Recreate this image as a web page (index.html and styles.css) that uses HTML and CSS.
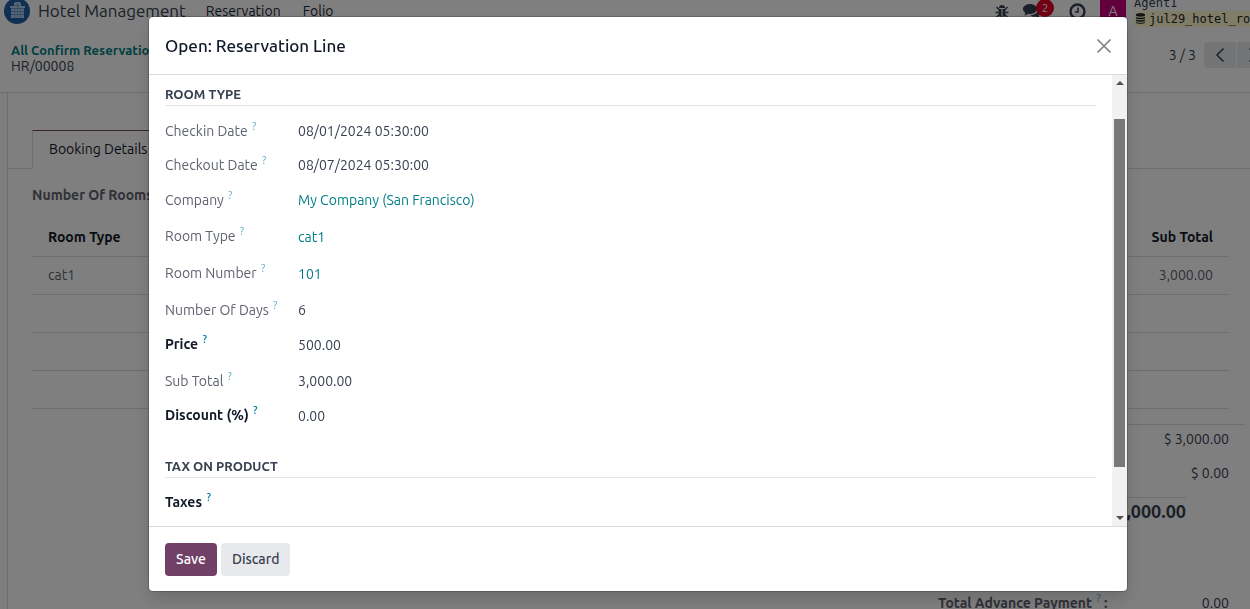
FILE: index.html
```html
<!DOCTYPE html>
<html lang="en">
<head>
<meta charset="utf-8">
<title>Hotel Management - Reservation Line</title>
<link rel="stylesheet" href="styles.css">
</head>
<body>
<div class="app">
  <header class="navbar">
    <svg class="app-icon" viewBox="0 0 26 26" aria-hidden="true">
      <circle cx="13" cy="13" r="13" fill="#1f5fa8"/>
      <path d="M6 8h4V5h1V4h5v1h1v3h4v2h-1v10H7V10H6z" fill="#b4cde6"/>
      <path d="M7 10.500h13M7 13.500h13M7 16.500h13M11 7.500h5" stroke="#5f93cc" fill="none"/>
      <path d="M10.500 10v10M13.500 5v15M16.500 10v10" stroke="#7aa5d2" fill="none"/>
    </svg>
    <span class="brand">Hotel Management</span>
    <nav class="menu">
      <a href="#">Reservation</a>
      <a href="#">Folio</a>
    </nav>
    <div class="systray">
      <button class="tray-btn" aria-label="Debug">
        <svg width="14" height="14" viewBox="0 0 14 14"><path d="M4 4a3 3 0 0 1 6 0zM3.500 5H6.500v8C4.500 13 3.500 11.500 3.500 9zM7.500 5h3v4c0 2.500-1 4-3 4z" fill="#374151"/><path d="M1.500 3L4 5.500M12.500 3L10 5.500M.5 8.500h3M10.500 8.500h3M1.500 13L4.300 10.800M12.500 13L9.700 10.800" stroke="#374151" stroke-width="1.500"/></svg>
      </button>
      <button class="tray-btn chat" aria-label="Messages, 2 unread">
        <svg width="18" height="16" viewBox="0 0 18 16"><path d="M7 1c3.900 0 7 2.200 7 5s-3.100 5-7 5c-.6 0-1.200 0-1.700-.2C4 11.800 2.500 12.400 1 12.500c.8-.8 1.300-1.600 1.500-2.600C1 9 0 7.600 0 6c0-2.800 3.100-5 7-5z" fill="#374151"/><path d="M15.200 5.500C17 6.400 18 7.700 18 9.200c0 1.500-.9 2.800-2.400 3.600.2 1 .7 1.800 1.400 2.500-1.500-.1-3-.7-4.200-1.700-2.500.4-4.600-.1-6-1.300 4.600.1 8.400-2.700 8.400-6.300z" fill="#374151"/></svg>
        <span class="badge">2</span>
      </button>
      <button class="tray-btn" aria-label="Activities">
        <svg width="17" height="17" viewBox="0 0 17 17" fill="none" stroke="#374151"><circle cx="8.500" cy="8.500" r="7" stroke-width="2.400"/><path d="M9 4.500v4.500H6" stroke-width="1.500"/></svg>
      </button>
      <span class="avatar">A</span>
      <div class="user">
        <span>Agent1</span>
        <span class="db"><svg width="9" height="11" viewBox="0 0 9 11"><path d="M0 1.500C0-.3 9-.3 9 1.500v1C9 4 0 4 0 2.500zM0 4c1 1 8 1 9 0v1.300c-1 1.300-8 1.300-9 0zM0 6.500c1 1 8 1 9 0v1.300c-1 1.300-8 1.300-9 0zM0 9c1 1 8 1 9 0v.8c-1 1.400-8 1.400-9 0z" fill="#212529"/></svg>jul29_hotel_ro</span>
      </div>
    </div>
  </header>

  <div class="control-panel">
    <div class="crumbs">
      <a href="#">All Confirm Reservations</a>
      <span>HR/00008</span>
    </div>
    <div class="pager">
      <span>3 / 3</span>
      <div class="pager-btns">
        <button aria-label="Previous"><svg width="10" height="16" viewBox="0 0 10 16"><path d="M8.500 1.500L2 8l6.500 6.500" fill="none" stroke="#374151" stroke-width="1.500"/></svg></button>
        <button aria-label="Next"><svg width="10" height="16" viewBox="0 0 10 16"><path d="M1.500 1.500L8 8l-6.500 6.500" fill="none" stroke="#374151" stroke-width="1.500"/></svg></button>
      </div>
    </div>
  </div>

  <main class="sheet">
    <div class="tabs"><button class="tab">Booking Details</button></div>
    <div class="tab-body">
      <div class="rooms-label">Number Of Rooms</div>
      <table class="lines">
        <thead><tr><th>Room Type</th><th class="num">Sub Total</th></tr></thead>
        <tbody>
          <tr><td>cat1</td><td class="num">3,000.00</td></tr>
          <tr><td></td><td></td></tr>
          <tr><td></td><td></td></tr>
          <tr><td></td><td></td></tr>
        </tbody>
      </table>
    </div>
    <div class="totals">
      <div class="amount">$ 3,000.00</div>
      <div class="amount">$ 0.00</div>
      <div class="grand">,000.00</div>
      <div class="advance"><span>Total Advance Payment <sup class="help">?</sup> :</span><span class="advance-value">0.00</span></div>
    </div>
  </main>
</div>

<div class="overlay">
  <section class="modal" role="dialog" aria-modal="true" aria-labelledby="dialog-title">
    <header class="modal-head">
      <h1 id="dialog-title">Open: Reservation Line</h1>
      <button class="close" aria-label="Close"><svg width="16" height="16" viewBox="0 0 16 16"><path d="M1.500 1.500l13 13M14.500 1.500l-13 13" stroke="#808080" stroke-width="1.700"/></svg></button>
    </header>
    <div class="modal-body">
      <div class="form">
        <h2>ROOM TYPE</h2>
        <dl class="fields">
          <div class="row date"><dt>Checkin Date <sup class="help">?</sup></dt><dd>08/01/2024 05:30:00</dd></div>
          <div class="row date"><dt>Checkout Date <sup class="help">?</sup></dt><dd>08/07/2024 05:30:00</dd></div>
          <div class="row"><dt>Company <sup class="help">?</sup></dt><dd><a href="#">My Company (San Francisco)</a></dd></div>
          <div class="row link"><dt>Room Type <sup class="help">?</sup></dt><dd><a href="#">cat1</a></dd></div>
          <div class="row link"><dt>Room Number <sup class="help">?</sup></dt><dd><a href="#">101</a></dd></div>
          <div class="row"><dt>Number Of Days <sup class="help">?</sup></dt><dd>6</dd></div>
          <div class="row editable"><dt><label for="price">Price <sup class="help">?</sup></label></dt><dd><input id="price" type="text" value="500.00"></dd></div>
          <div class="row"><dt>Sub Total <sup class="help">?</sup></dt><dd>3,000.00</dd></div>
          <div class="row editable"><dt><label for="discount">Discount (%) <sup class="help">?</sup></label></dt><dd><input id="discount" type="text" value="0.00"></dd></div>
        </dl>
        <h2>TAX ON PRODUCT</h2>
        <dl class="fields">
          <div class="row editable"><dt><label for="taxes">Taxes <sup class="help">?</sup></label></dt><dd><input id="taxes" type="text"></dd></div>
        </dl>
      </div>
      <div class="scrollbar" aria-hidden="true">
        <svg width="8" height="4" viewBox="0 0 8 4"><path d="M0 4L4 0l4 4z" fill="#505050"/></svg>
        <div class="track"><div class="thumb"></div></div>
        <svg width="8" height="4" viewBox="0 0 8 4"><path d="M0 0l4 4 4-4z" fill="#505050"/></svg>
      </div>
    </div>
    <footer class="modal-foot">
      <button class="btn primary">Save</button>
      <button class="btn">Discard</button>
    </footer>
  </section>
</div>
</body>
</html>
```
FILE: styles.css
```css
* { box-sizing: border-box; }
html, body { height: 100%; margin: 0; }
body {
  overflow: hidden;
  font-family: Ubuntu, "Noto Sans", sans-serif;
  font-size: 14px;
  line-height: 20px;
  color: #374151;
  background: #f9fafb;
}
h1, h2, dl, dd { margin: 0; }
a { text-decoration: none; color: #017e84; }
button, input { font: inherit; color: inherit; border: 0; padding: 0; background: none; }
.app { height: 100%; overflow: hidden; }

/* top bar */
.navbar { display: flex; align-items: center; height: 22px; padding-left: 4px; background: #fff; }
.app-icon { width: 26px; height: 26px; margin-right: 8px; flex: none; }
.brand { font-size: 17px; white-space: nowrap; }
.menu { display: flex; gap: 22px; margin-left: 20px; }
.menu a { color: #1f2937; }
.systray { display: flex; align-items: center; margin-left: auto; }
.tray-btn { display: flex; align-items: center; }
.systray .tray-btn { margin-right: 14px; }
.tray-btn.chat { position: relative; width: 32px; }
.badge {
  position: absolute; left: 13px; top: -4px;
  width: 18px; height: 18px; border-radius: 9px;
  background: #e4002b; color: #fff; font-size: 11px; line-height: 18px;
}
.avatar { width: 26px; height: 26px; margin-right: 8px; background: #c4007a; color: #fff; text-align: center; line-height: 26px; }
.user { display: flex; flex-direction: column; width: 116px; font-family: "DejaVu Sans Mono", monospace; font-size: 12px; line-height: 15px; }
.db { display: flex; align-items: center; gap: 4px; padding-left: 2px; line-height: 16px; background: #fffbd0; color: #212529; }
.db svg { flex: none; }

/* breadcrumbs and pager */
.control-panel { display: flex; justify-content: space-between; align-items: center; height: 71px; padding: 2px 0 0 11px; background: #fff; border-bottom: 1px solid #d8dadd; }
.crumbs { display: flex; flex-direction: column; font-size: 14px; line-height: 16px; }
.crumbs a { font-size: 13px; font-weight: 600; }
.pager { display: flex; align-items: center; gap: 8px; margin: 0 -19px 6px 0; }
.pager-btns { display: flex; gap: 1px; }
.pager-btns button { display: flex; align-items: center; justify-content: center; width: 32px; height: 26px; background: #e7e9ed; }
.pager-btns button:first-child { border-radius: 4px 0 0 4px; }

/* form sheet */
.sheet { height: 540px; margin-left: 7px; margin-right: -8px; background: #fff; border-left: 1px solid #d8dadd; }
.tabs { display: flex; padding: 37px 0 0 24px; height: 76px; border-bottom: 1px solid #d8dadd; }
.tab { height: 39px; padding: 0 16px 2px; color: #111827; background: #fff; border: 1px solid #d8dadd; border-top-color: #714b67; border-bottom-color: #fff; }
.tab-body { padding: 16px 29px 0 24px; }
.rooms-label { font-weight: 600; color: #5f636f; }
.lines { width: 100%; margin-top: 13px; border-collapse: collapse; }
.lines th { height: 38px; padding: 0 16px; text-align: left; font-weight: 600; color: #111827; border-bottom: 1px solid #d8dadd; }
.lines td { height: 38px; padding: 0 16px; color: #5f636f; border-bottom: 1px solid #d8dadd; }
.lines .num { text-align: right; }
.totals { display: flex; flex-direction: column; margin: 15px 13px 0 900px; padding: 4px 16px 0 0; border-top: 1px solid #d8dadd; }
.amount { text-align: right; margin-bottom: 14px; }
.grand { align-self: flex-end; margin-right: 43px; padding-top: 3px; border-top: 1px solid #d8dadd; font-size: 18px; font-weight: 600; }
.advance { display: flex; justify-content: space-between; margin-top: 72px; padding-left: 30px; font-weight: 600; color: #5f636f; white-space: nowrap; }
.advance-value { font-weight: 400; color: #374151; }

/* dialog */
.overlay { position: fixed; inset: 0; display: flex; justify-content: center; padding: 17px 0 18px 26px; background: rgba(0, 0, 0, .5); }
.modal { display: flex; flex-direction: column; width: 100%; max-width: 978px; background: #fff; border-radius: 4px; overflow: hidden; box-shadow: 0 0 0 1px rgba(0, 0, 0, .2), 0 8px 16px rgba(0, 0, 0, .15); }
.modal-head { display: flex; align-items: center; justify-content: space-between; height: 58px; padding: 0 15px 0 16px; border-bottom: 1px solid #d8dadd; }
.modal-head h1 { font-size: 17px; font-weight: 500; color: #111827; }
.close { display: flex; }
.modal-body { display: flex; flex: 1; min-height: 0; }
.form { flex: 1; padding: 9px 16px 0; }
.form h2 { height: 22px; font-size: 13px; font-weight: 700; line-height: 20px; border-bottom: 1px solid #e2e4e7; }
.fields { display: flex; flex-direction: column; padding: 8px 0 22px; }
.row { display: grid; grid-template-columns: 133px 1fr; align-items: center; height: 36px; }
.row.date { height: 34px; }
.row.link { height: 37px; }
.row dt { color: #5f636f; }
.row.editable { height: 35px; padding-bottom: 1px; }
.row.link dt, .row.editable dt { padding-bottom: 2px; }
.row.editable dt { color: #111827; font-weight: 600; }
.row input { display: block; width: 100%; height: 24px; outline: 0; }
.help { margin-left: 1px; font-size: 11px; font-weight: 400; line-height: 0; color: #0180a5; opacity: .65; vertical-align: 6px; }
.editable .help { opacity: 1; font-weight: 500; }
.scrollbar { display: flex; flex-direction: column; align-items: center; width: 15px; padding: 6px 0; background: #f1f1f1; }
.track { flex: 1; width: 11px; padding: 34px 0 49px; }
.thumb { height: 100%; background: #787878; }
.modal-foot { display: flex; align-items: center; gap: 4px; height: 65px; padding: 0 16px; border-top: 1px solid #d8dadd; }
.btn { height: 33px; padding: 0 11px; border-radius: 4px; font-weight: 500; color: #374151; background: #e7e9ed; }
.btn.primary { color: #fff; background: #714066; }
```
